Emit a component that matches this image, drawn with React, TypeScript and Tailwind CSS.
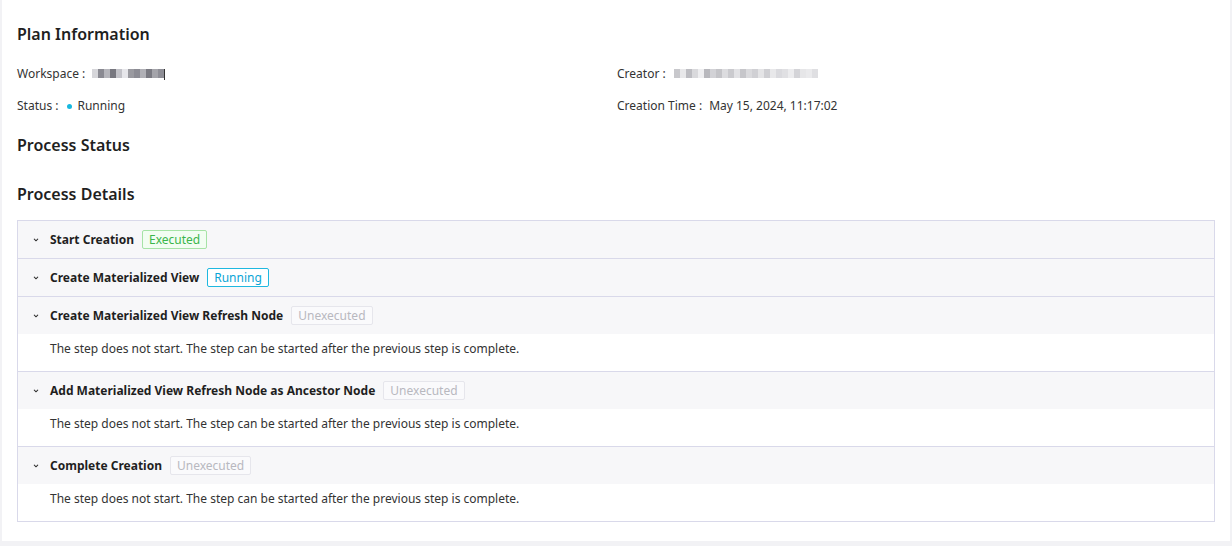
import React from 'react'

const STEPS = [
  { title: 'Start Creation', status: 'executed', open: false },
  { title: 'Create Materialized View', status: 'running', open: false },
  { title: 'Create Materialized View Refresh Node', status: 'unexecuted', open: true },
  { title: 'Add Materialized View Refresh Node as Ancestor Node', status: 'unexecuted', open: true },
  { title: 'Complete Creation', status: 'unexecuted', open: true },
]

const BADGE: Record<string, { label: string; cls: string }> = {
  executed: { label: 'Executed', cls: 'border-[#a6e3a6] bg-[#f2fdf2] text-[#3bb54a]' },
  running: { label: 'Running', cls: 'border-[#1fb8e0] bg-white text-[#0aa5d6]' },
  unexecuted: { label: 'Unexecuted', cls: 'border-[#e6e6ec] bg-[#fafafc] text-[#b8b8bf]' },
}

// blurred placeholder values, drawn as pixel blocks
function Blur({ cells }: { cells: string[] }) {
  return (
    <span className="inline-flex items-center h-[10px]">
      {cells.map((c, i) => (
        <span key={i} className={`inline-block w-[6px] h-[9px] ${c}`} />
      ))}
    </span>
  )
}

function Chevron() {
  return (
    <svg width="8" height="8" viewBox="0 0 8 8" className="text-[#333]">
      <path d="M2.3 3.2l1.7 1.6 1.7-1.6" fill="none" stroke="currentColor" strokeWidth="1.1" strokeLinecap="round" />
    </svg>
  )
}

export default function App() {
  return (
    <div
      className="min-h-[546px] bg-[#f2f2f5] px-[2px] pb-[5px] text-[#333] text-[12px]"
      style={{ fontFamily: '"Noto Sans", "Open Sans", sans-serif' }}
    >
      <div className="bg-white px-[15px] pt-[22px] pb-[19px] h-[541px]">
        <h2 className="text-[16px] font-semibold text-[#1f1f1f] leading-[24px]">Plan Information</h2>

        <div className="grid grid-cols-2 mt-[18px] gap-y-[12px]">
          <div className="flex items-center h-[20px]">
            <span>Workspace :</span>
            <span className="ml-[7px]">
              <Blur cells={['bg-[#d6d6da]', 'bg-[#8a8a92]', 'bg-[#b6b6bc]', 'bg-[#77777f]', 'bg-[#c2c2c8]', 'bg-[#e6e6ea]', 'bg-[#9a9aa0]', 'bg-[#8c8c94]', 'bg-[#b0b0b6]', 'bg-[#7a7a82]', 'bg-[#a4a4aa]', 'bg-[#8e8e96]']} />
              <span className="inline-block w-[1px] h-[11px] bg-[#333] align-middle" />
            </span>
          </div>
          <div className="flex items-center h-[20px] pl-[1px]">
            <span>Creator :</span>
            <span className="ml-[8px]">
              <Blur cells={['bg-[#c8c8cc]', 'bg-[#e8e8ea]', 'bg-[#bdbdc2]', 'bg-[#d9d9dc]', 'bg-[#eeeef0]', 'bg-[#b8b8bd]', 'bg-[#d2d2d6]', 'bg-[#c4c4c8]', 'bg-[#dcdcdf]', 'bg-[#cacace]', 'bg-[#e2e2e5]', 'bg-[#c6c6ca]', 'bg-[#dadadd]', 'bg-[#d0d0d4]', 'bg-[#e4e4e6]', 'bg-[#cfcfd3]', 'bg-[#e8e8ea]', 'bg-[#dadade]', 'bg-[#e0e0e3]', 'bg-[#ececee]', 'bg-[#d4d4d8]', 'bg-[#e6e6e8]', 'bg-[#eaeaec]', 'bg-[#dfdfe2]']} />
            </span>
          </div>
          <div className="flex items-center h-[20px]">
            <span>Status :</span>
            <span className="ml-[9px] w-[5px] h-[5px] rounded-full bg-[#17b8df]" />
            <span className="ml-[5px]">Running</span>
          </div>
          <div className="flex items-center h-[20px] pl-[1px]">
            <span>Creation Time :</span>
            <span className="ml-[7px]">May 15, 2024, 11:17:02</span>
          </div>
        </div>

        <h2 className="text-[16px] font-semibold text-[#1f1f1f] leading-[24px] mt-[17px]">Process Status</h2>
        <h2 className="text-[16px] font-semibold text-[#1f1f1f] leading-[24px] mt-[25px]">Process Details</h2>

        <div className="mt-[14px] border border-[#d9d9ea]">
          {STEPS.map((s, i) => {
            const b = BADGE[s.status]
            return (
              <div key={s.title} className={i > 0 ? 'border-t border-[#d9d9ea]' : ''}>
                <div className="flex items-center h-[37px] bg-[#f7f7f9] pl-[14px]">
                  <Chevron />
                  <span className="ml-[10px] font-bold text-[#1f1f1f]">{s.title}</span>
                  <span className={`ml-[8px] border rounded-[2px] px-[6px] h-[19px] leading-[17px] ${b.cls}`}>{b.label}</span>
                </div>
                {s.open && (
                  <div className="h-[37px] pl-[32px] pt-[6px] bg-white">
                    The step does not start. The step can be started after the previous step is complete.
                  </div>
                )}
              </div>
            )
          })}
        </div>
      </div>
    </div>
  )
}
